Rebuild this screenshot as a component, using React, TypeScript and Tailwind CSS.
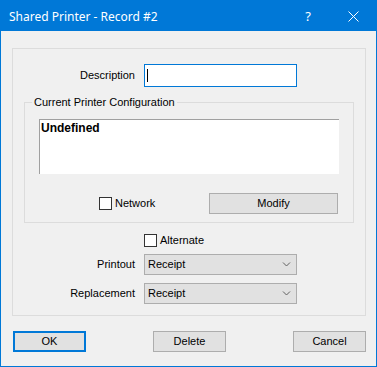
import React from "react";

function Chevron() {
  return (
    <svg width="9" height="5" viewBox="0 0 9 5" className="block">
      <path d="M1 0.5 L4.5 4 L8 0.5" fill="none" stroke="#606060" strokeWidth="1" />
    </svg>
  );
}

function Select({ value }: { value: string }) {
  return (
    <div className="flex h-[21px] w-[153px] items-center justify-between border border-[#adadad] bg-[#e1e1e1] pl-[3px] pr-[5px]">
      <span>{value}</span>
      <Chevron />
    </div>
  );
}

function Check() {
  return <div className="h-[13px] w-[13px] border border-[#333333] bg-white" />;
}

function Btn({ label, def, w = "w-[73px]" }: { label: string; def?: boolean; w?: string }) {
  return (
    <div
      className={
        "flex h-[21px] items-center justify-center bg-[#e1e1e1] " +
        w +
        " " +
        (def ? "border-2 border-[#0078d7]" : "border border-[#adadad]")
      }
    >
      {label}
    </div>
  );
}

export default function App() {
  return (
    <div
      className="flex h-[367px] w-[377px] flex-col border border-[#0078d7] bg-[#f0f0f0] text-[11px] leading-[13px] text-black"
      style={{ fontFamily: '"Liberation Sans", Arial, sans-serif' }}
    >
      <div
        className="flex h-[30px] shrink-0 items-center bg-[#0078d7] text-[12px] text-white"
        style={{ fontFamily: '"Noto Sans", "Open Sans", sans-serif' }}
      >
        <span className="ml-[8px] flex-1">Shared Printer - Record #2</span>
        <span className="mr-[37px] text-[13px]">?</span>
        <svg width="11" height="11" viewBox="0 0 11 11" className="mr-[17px]">
          <path d="M0.5 0.5 L10.5 10.5 M10.5 0.5 L0.5 10.5" stroke="white" strokeWidth="1" />
        </svg>
      </div>

      <div className="flex flex-1 flex-col pl-[11px] pr-[10px] pt-[17px]">
        <div className="flex h-[268px] w-[354px] flex-col border border-[#dcdcdc]">
          <div className="mt-[15px] flex items-center">
            <span className="w-[122px] text-right">Description</span>
            <div className="ml-[9px] flex h-[23px] w-[153px] items-center border border-[#0078d7] bg-white pl-[2px]">
              <div className="h-[13px] w-[1px] bg-black" />
            </div>
          </div>

          <div className="ml-[11px] mt-[15px] flex h-[121px] w-[330px] flex-col border border-[#dcdcdc]">
            <span className="-mt-[7px] ml-[7px] self-start bg-[#f0f0f0] px-[2px]">
              Current Printer Configuration
            </span>
            <div className="ml-[14px] mt-[10px] h-[55px] w-[300px] border-l border-t border-[#a0a0a0] bg-white pl-[1px] pt-[1px] text-[12px] leading-[14px] font-bold">
              Undefined
            </div>
            <div className="mt-[19px] flex items-center">
              <div className="ml-[74px]">
                <Check />
              </div>
              <span className="ml-[3px]">Network</span>
              <div className="ml-auto mr-[15px]">
                <Btn label="Modify" w="w-[129px]" />
              </div>
            </div>
          </div>

          <div className="ml-[131px] mt-[11px] flex items-center">
            <Check />
            <span className="ml-[3px]">Alternate</span>
          </div>

          <div className="mt-[7px] flex items-center">
            <span className="w-[122px] text-right">Printout</span>
            <div className="ml-[9px]">
              <Select value="Receipt" />
            </div>
          </div>
          <div className="mt-[8px] flex items-center">
            <span className="w-[122px] text-right">Replacement</span>
            <div className="ml-[9px]">
              <Select value="Receipt" />
            </div>
          </div>
        </div>

        <div className="ml-[1px] mt-[15px] flex justify-between">
          <Btn label="OK" def />
          <Btn label="Delete" />
          <Btn label="Cancel" />
        </div>
      </div>
    </div>
  );
}
